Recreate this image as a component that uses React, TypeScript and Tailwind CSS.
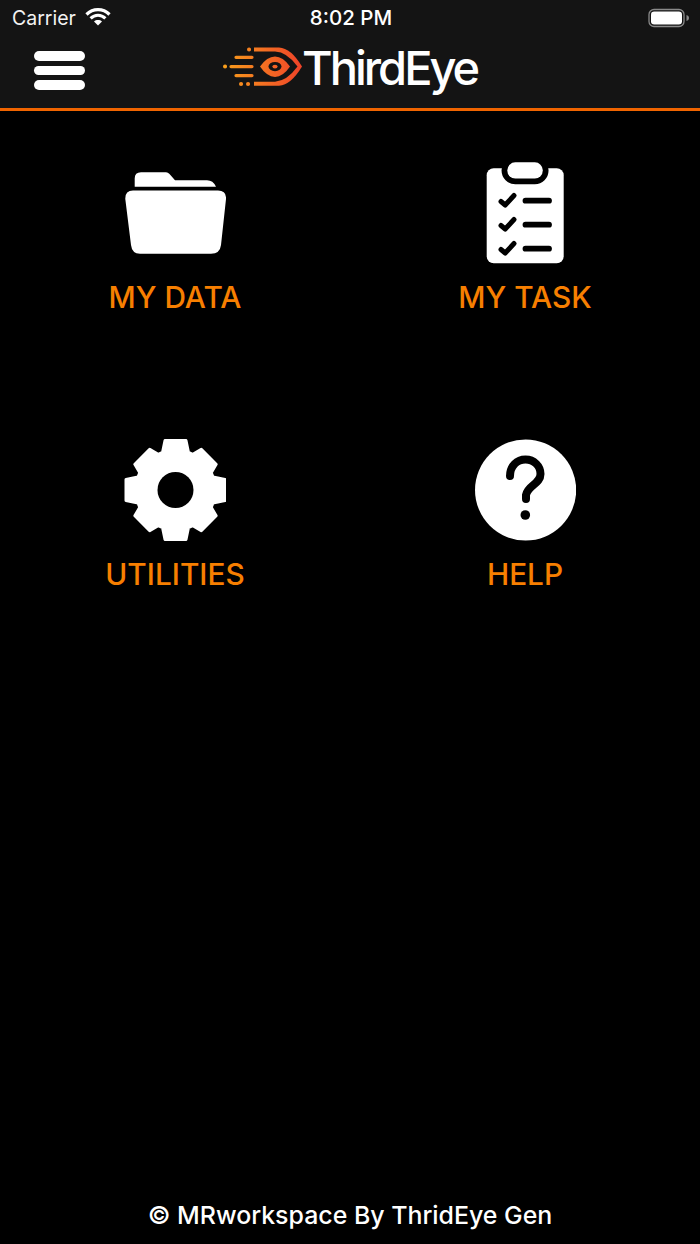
import React from "react";

const teeth = Array.from({ length: 8 }, (_, i) => i);
function gearPath() {
  const cx = 50.5, cy = 51;
  const pts: string[] = [];
  teeth.forEach((i) => {
    const a = (i * Math.PI) / 4;
    const tip = i % 2 === 0 ? 49.5 : 47;
    const p = (x: number, y: number) => {
      const rx = x * Math.cos(a) - y * Math.sin(a) + cx;
      const ry = x * Math.sin(a) + y * Math.cos(a) + cy;
      return `${rx.toFixed(2)} ${ry.toFixed(2)}`;
    };
    pts.push(p(-13, -37.5), p(-10.5, -tip), p(10.5, -tip), p(13, -37.5));
  });
  return "M" + pts.join("L") + "Z";
}

function FolderIcon() {
  return (
    <svg width="102" height="102" viewBox="-1 0 102 102" fill="#fff">
      <path d="M9.7 24.7V16.5Q9.7 10.3 16 10.3H41Q43 10.3 44.5 12L50 18.3H82Q88 18.3 91 24.7Z" />
      <path d="M8 28.5H93Q101.5 28.5 101 37L96 83Q95 91.7 86 91.7H15Q7 91.7 6 83L0.3 37Q0 28.5 8 28.5Z" />
    </svg>
  );
}

function TaskIcon() {
  return (
    <svg width="102" height="102" viewBox="-1 0 102 102" fill="none">
      <rect x="11.7" y="6.3" width="77" height="95" rx="7" fill="#fff" />
      <rect x="32.3" y="0.3" width="35.5" height="16.3" rx="8" fill="#000" stroke="#000" strokeWidth="11.5" />
      <rect x="32.3" y="0.3" width="35.5" height="16.3" rx="8" fill="#fff" />
      {[0, 24, 48].map((d) => (
        <g key={d} stroke="#000" strokeLinecap="round" strokeLinejoin="round">
          <path d={`M26 ${39.5 + d}L30.2 ${43 + d}L39 ${33.5 + d}`} strokeWidth="5" />
          <path d={`M50.5 ${38.7 + d}H74`} strokeWidth="5.8" />
        </g>
      ))}
    </svg>
  );
}

function GearIcon() {
  return (
    <svg width="102" height="102" viewBox="-1 0 102 102">
      <path d={gearPath()} fill="#fff" stroke="#fff" strokeWidth="3" strokeLinejoin="round" />
      <circle cx="50.5" cy="51" r="18" fill="#000" />
    </svg>
  );
}

function HelpIcon() {
  return (
    <svg width="102" height="102" viewBox="-1 0 102 102" fill="none">
      <circle cx="50.6" cy="51" r="50.6" fill="#fff" />
      <path
        d="M35 37C35 27 42 20.5 50.5 20.5C59 20.5 65.5 27 65.5 35C65.5 45 53 46 51 56L51 60"
        stroke="#000"
        strokeWidth="8"
        strokeLinecap="round"
      />
      <circle cx="50.3" cy="76" r="4.8" fill="#000" />
    </svg>
  );
}

function Logo() {
  return (
    <svg width="80" height="40" viewBox="0 0 80 40" fill="none">
      <defs>
        <linearGradient id="lg" x1="0" y1="0" x2="80" y2="0" gradientUnits="userSpaceOnUse">
          <stop offset="0" stopColor="#f9a01b" />
          <stop offset="1" stopColor="#ef4129" />
        </linearGradient>
      </defs>
      <path d="M31 0.5H56Q68 1 79 19.6Q68 38 56 38.8H31Z" fill="url(#lg)" />
      <path d="M28 4.6H52Q64 5 74.5 19.6Q64 34 52 34.8H28Z" fill="#141414" />
      <path d="M37 19.6Q44 9.5 52 9.5Q60 9.5 67 19.6Q60 30 52 30Q44 30 37 19.6Z" fill="url(#lg)" />
      <ellipse cx="52" cy="19.6" rx="6.5" ry="4.6" fill="#141414" />
      <ellipse cx="52" cy="19.6" rx="2.6" ry="1.9" fill="url(#lg)" />
      <g stroke="url(#lg)" strokeLinecap="round" strokeLinejoin="round">
        <path d="M13 10.3H29M8 19.6H29M13 28.6H29" strokeWidth="3.2" />
        <path d="M26 2.4H26.1M2 19.6H2.1M18 37H18.1M25 37H25.1" strokeWidth="4" />
      </g>
    </svg>
  );
}

const items = [
  { label: "MY DATA", Icon: FolderIcon },
  { label: "MY TASK", Icon: TaskIcon },
  { label: "UTILITIES", Icon: GearIcon },
  { label: "HELP", Icon: HelpIcon },
];

export default function App() {
  return (
    <div className="flex h-[1244px] w-[700px] flex-col bg-black font-['Inter','Liberation_Sans',sans-serif] text-white">
      <header className="h-[111px] border-b-[3px] border-[#f06400] bg-[#141414]">
        <div className="grid h-[36px] grid-cols-3 items-center pl-3 pr-[10px]">
          <div className="flex items-center gap-[9px]">
            <span className="text-[19.5px] leading-[22px] text-[#f2f2f2]">Carrier</span>
            <svg width="26" height="19" viewBox="0 0 26 19" fill="none" stroke="#fff" strokeWidth="3.2" className="mb-1">
              <path d="M1.5 7.5C8 1 18 1 24.5 7.5" />
              <path d="M5.6 11.3C10 7.2 16 7.2 20.4 11.3" />
              <path d="M13 18.5L9 14.5C11.3 12.6 14.7 12.6 17 14.5Z" fill="#fff" stroke="none" />
            </svg>
          </div>
          <span className="whitespace-nowrap text-center text-[20.5px] font-medium leading-[22px]">8:02 PM</span>
          <svg width="42" height="20" viewBox="0 0 42 20" fill="none" className="justify-self-end">
            <rect x="1" y="1.5" width="35" height="17" rx="5" stroke="#8a8a8a" strokeWidth="1.3" />
            <rect x="3" y="3.5" width="31" height="13" rx="3.2" fill="#fff" />
            <path d="M38.5 7V13C40 12.6 41 11.5 41 10C41 8.5 40 7.4 38.5 7Z" fill="#8a8a8a" />
          </svg>
        </div>
        <div className="relative flex h-[72px] items-center pl-[34px]">
          <div className="mt-[-3px] flex w-[51px] flex-col gap-[5px]">
            <div className="h-[9.5px] rounded-full bg-white" />
            <div className="h-[9.5px] rounded-full bg-white" />
            <div className="h-[9.5px] rounded-full bg-white" />
          </div>
          <div className="absolute left-[223px] top-[11px] flex items-start">
            <Logo />
            <span className="ml-[-1px] mt-[-5px] text-[47px] font-medium leading-[52px] tracking-[-3px] text-white">ThirdEye</span>
          </div>
        </div>
      </header>
      <main className="grid grid-cols-2 gap-y-[124px] pt-[51px]">
        {items.map(({ label, Icon }) => (
          <div key={label} className="flex flex-col items-center">
            <div className="h-[102px] w-[102px]">
              <Icon />
            </div>
            <span className="mt-[16px] text-[29.8px] font-medium leading-[35px] text-[#f77f00]">{label}</span>
          </div>
        ))}
      </main>
      <footer className="mt-auto pb-[11px] text-center text-[24.9px] font-medium leading-[36px]">© MRworkspace By ThridEye Gen</footer>
    </div>
  );
}
